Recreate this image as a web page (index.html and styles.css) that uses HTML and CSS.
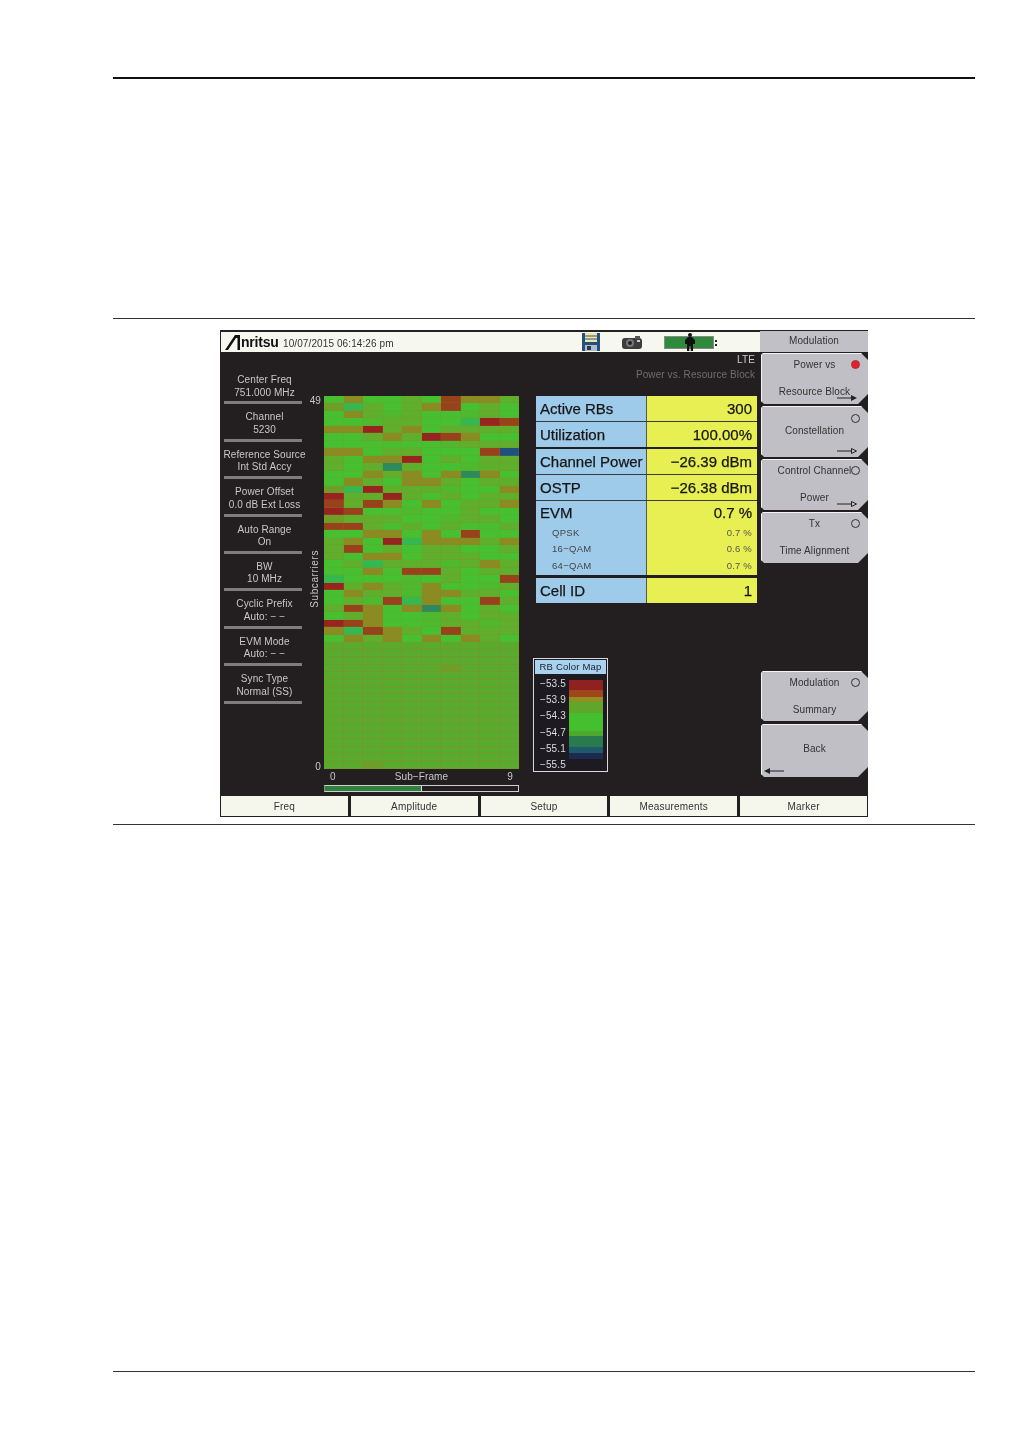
FILE: index.html
```html
<!DOCTYPE html>
<html lang="en">
<head>
<meta charset="utf-8">
<title>LTE Power vs Resource Block</title>
<link rel="stylesheet" href="styles.css">
</head>
<body>
<div class="page">
  <div class="rule-head"></div>
  <div class="rule-fig"></div>
  <div class="figure">
    <div class="device">
      <div class="main">
        <div class="titlebar">
          <div class="logo">
            <svg class="logo-a" width="15" height="15" viewBox="0 0 15 15"><path d="M0 15 L10 0 H15 V15 H12.500 V3 H11 L3 15 Z" fill="#111"/></svg>
            <span class="logo-text">nritsu</span>
          </div>
          <span class="date">10/07/2015 06:14:26 pm</span>
          <svg class="ic-floppy" width="18" height="18" viewBox="0 0 18 18"><rect width="18" height="18" fill="#24507a"/><rect x="3" y="0" width="12" height="9" fill="#e9e6b4"/><path d="M3 3h12M3 6h12" stroke="#44505a" stroke-width="1"/><rect x="3" y="12" width="12" height="6" fill="#aebccb"/><rect x="5" y="13" width="4" height="4" fill="#2c3a48"/></svg>
          <svg class="ic-camera" width="20" height="13" viewBox="0 0 20 13"><rect x="0" y="2" width="20" height="11" rx="3" fill="#3d3d3d"/><rect x="13" y="0" width="5" height="3" fill="#555"/><circle cx="8" cy="7" r="4" fill="#777"/><circle cx="8" cy="7" r="2" fill="#222"/><rect x="15" y="4" width="3" height="2" fill="#ccc"/></svg>
          <svg class="ic-battery" width="54" height="18" viewBox="0 0 54 18"><rect x=".5" y="3.500" width="49" height="12" fill="#2f8a3c" stroke="#8a8a8a"/><path d="M51 7h2v2h-2zM51 11h2v2h-2z" fill="#222"/><circle cx="26" cy="2" r="2" fill="#111"/><path d="M24 4h4l3 3v4l-2 0v7h-2.300v-5h-1.400v5h-2.300v-7l-2 0v-4z" fill="#111"/></svg>
        </div>
        <div class="body">
          <div class="params">
            <div class="param">Center Freq<br>751.000 MHz</div>
            <div class="param">Channel<br>5230</div>
            <div class="param">Reference Source<br>Int Std Accy</div>
            <div class="param">Power Offset<br>0.0 dB Ext Loss</div>
            <div class="param">Auto Range<br>On</div>
            <div class="param">BW<br>10 MHz</div>
            <div class="param">Cyclic Prefix<br>Auto: − −</div>
            <div class="param">EVM Mode<br>Auto: − −</div>
            <div class="param">Sync Type<br>Normal (SS)</div>
          </div>
          <div class="plot">
            <div class="plot-row">
              <div class="y-axis">
                <span>49</span>
                <span class="y-title">Subcarriers</span>
                <span class="y-zero">0</span>
              </div>
              <div class="heatmap" id="heatmap"></div>
            </div>
            <div class="x-axis"><span>0</span><span>Sub−Frame</span><span>9</span></div>
            <div class="progress"><div class="progress-fill"></div></div>
          </div>
          <div class="readout">
            <div class="status">
              <div class="status-mode">LTE</div>
              <div class="status-view">Power vs. Resource Block</div>
            </div>
            <div class="table">
              <div class="row"><span class="lab">Active RBs</span><span class="val">300</span></div>
              <div class="row sep-thick"><span class="lab">Utilization</span><span class="val">100.00%</span></div>
              <div class="row"><span class="lab">Channel Power</span><span class="val">−26.39 dBm</span></div>
              <div class="row"><span class="lab">OSTP</span><span class="val">−26.38 dBm</span></div>
              <div class="row row-sub"><span class="lab">EVM</span><span class="val">0.7 %</span></div>
              <div class="row row-mini"><span class="lab">QPSK</span><span class="val">0.7 %</span></div>
              <div class="row row-mini"><span class="lab">16−QAM</span><span class="val">0.6 %</span></div>
              <div class="row row-mini sep-thick"><span class="lab">64−QAM</span><span class="val">0.7 %</span></div>
              <div class="row"><span class="lab">Cell ID</span><span class="val">1</span></div>
            </div>
            <div class="legend">
              <div class="legend-title">RB Color Map</div>
              <div class="legend-body">
                <div class="legend-labels">
                  <span>−53.5</span><span>−53.9</span><span>−54.3</span><span>−54.7</span><span>−55.1</span><span>−55.5</span>
                </div>
                <div class="legend-swatch"></div>
              </div>
            </div>
          </div>
        </div>
      </div>
      <div class="keys">
        <div class="keys-title">Modulation</div>
        <div class="key"><span>Power vs</span><span>Resource Block</span>
          <i class="radio radio-on"></i>
          <svg class="arrow" width="20" height="6" viewBox="0 0 20 6"><path d="M0 3h14" stroke="#222"/><path d="M14 0l6 3-6 3z" fill="#222"/></svg>
        </div>
        <div class="key key-single"><span>Constellation</span>
          <i class="radio"></i>
          <svg class="arrow" width="20" height="6" viewBox="0 0 20 6"><path d="M0 3h14" stroke="#222"/><path d="M14.500 .5l5 2.500-5 2.500z" fill="none" stroke="#222"/></svg>
        </div>
        <div class="key"><span>Control Channel</span><span>Power</span>
          <i class="radio"></i>
          <svg class="arrow" width="20" height="6" viewBox="0 0 20 6"><path d="M0 3h14" stroke="#222"/><path d="M14.500 .5l5 2.500-5 2.500z" fill="none" stroke="#222"/></svg>
        </div>
        <div class="key"><span>Tx</span><span>Time Alignment</span>
          <i class="radio"></i>
        </div>
        <div class="key key-spaced"><span>Modulation</span><span>Summary</span>
          <i class="radio"></i>
        </div>
        <div class="key key-single key-back"><span>Back</span>
          <svg class="arrow-back" width="20" height="6" viewBox="0 0 20 6"><path d="M6 3h14" stroke="#222"/><path d="M6 0l-6 3 6 3z" fill="#222"/></svg>
        </div>
      </div>
      <div class="tabs">
        <div class="tab">Freq</div>
        <div class="tab">Amplitude</div>
        <div class="tab">Setup</div>
        <div class="tab">Measurements</div>
        <div class="tab">Marker</div>
      </div>
    </div>
  </div>
  <div class="rule-fig"></div>
  <div class="rule-foot"></div>
</div>
<script src="heatmap.js"></script>
</body>
</html>
```

FILE: styles.css
```css
* { box-sizing: border-box; }
html, body { margin: 0; padding: 0; background: #fff; }
body { font-family: "Liberation Sans", Arial, sans-serif; }

.page { display: flow-root; width: 862px; margin-left: 113px; height: 1456px; }
.rule-head { height: 2px; margin-top: 77px; background: #111; }
.rule-fig { height: 1px; background: #333; }
.rule-head + .rule-fig { margin-top: 239px; }
.rule-foot { height: 1px; margin-top: 546px; background: #333; }

.figure { padding: 11px 0 7px 107px; }

.device {
  width: 648px;
  height: 487px;
  background: #231f20;
  display: grid;
  grid-template-columns: 540px 108px;
  grid-template-rows: 465px 22px;
  font-size: 10px;
  letter-spacing: .1px;
  color: #c8c8c8;
  filter: blur(.4px);
}

/* title bar */
.main { display: flex; flex-direction: column; min-width: 0; }
.titlebar {
  height: 22px;
  margin-left: 1px;
  border-top: 2px solid #222;
  background: #f6f8f0;
  display: flex;
  align-items: center;
  color: #333;
}
.logo { display: flex; align-items: center; margin-left: 4px; width: 58px; flex: none; }
.logo-a { flex: none; }
.logo-text {
  font-size: 14px;
  font-weight: 700;
  letter-spacing: -.2px;
  color: #111;
  line-height: 15px;
  margin-left: 1px;
  margin-top: 1px;
}
.date { font-size: 10px; width: 299px; margin-top: 2px; flex: none; }
.ic-floppy { flex: none; margin-right: 22px; }
.ic-camera { flex: none; margin-right: 22px; }
.ic-battery { flex: none; }

/* body */
.body { flex: 1; display: flex; padding-left: 4px; min-height: 0; }

.params { width: 78px; padding-top: 22px; flex: none; }
.param {
  height: 30.400px;
  margin-bottom: 7px;
  padding-left: 3px;
  display: flex;
  justify-content: center;
  line-height: 12.500px;
  text-align: center;
  white-space: nowrap;
  border-bottom: 3px solid #7e7c7c;
}

.plot { width: 213px; margin-left: 4px; padding-top: 44px; flex: none; display: flex; flex-direction: column; }
.plot-row { display: flex; height: 373px; }
.y-axis {
  width: 18px;
  display: flex;
  flex-direction: column;
  justify-content: space-between;
  align-items: flex-end;
  padding: 0 3px 0 0;
  line-height: 10px;
}
.y-title {
  writing-mode: vertical-rl;
  transform: rotate(180deg);
  margin-right: 1px;
  margin-bottom: 10px;
  letter-spacing: .6px;
}
.y-zero { margin-bottom: -3px; }
.heatmap {
  width: 195px;
  height: 373px;
  display: grid;
  grid-template-columns: repeat(10, 1fr);
  grid-template-rows: repeat(50, 1fr);
}
.cell { border-right: 1px solid rgba(150, 125, 50, .18); border-bottom: 1px solid rgba(150, 125, 50, .18); }
.cell-g { background: #46c030; }
.cell-l { background: #4eb82e; }
.cell-m { background: #5fae2c; }
.cell-u { background: #5aaa2e; border-color: rgba(150, 125, 50, .35); }
.cell-y { background: #6f9e28; }
.cell-o { background: #8a8c22; }
.cell-r { background: #98241f; }
.cell-b { background: #98421c; }
.cell-t { background: #36b84e; }
.cell-d { background: #2c8a5c; }
.cell-n { background: #20517e; }

.x-axis {
  margin: 2px 0 0 18px;
  padding: 0 6px;
  height: 11px;
  line-height: 11px;
  display: flex;
  justify-content: space-between;
}
.progress {
  margin: 3px 0 0 18px;
  height: 7px;
  border: 1px solid #cfcfcf;
  border-left-color: #6aa36a;
}
.progress-fill { width: 50%; height: 100%; background: #2f8140; border-right: 1px solid #ddd; }

.readout { width: 221px; margin-left: 17px; flex: none; }
.status { height: 44px; text-align: right; padding-right: 2px; line-height: 15px; }
.status-mode { color: #ccc; }
.status-view { color: #6f6d6d; letter-spacing: .1px; }

.table { display: flex; flex-direction: column; color: #161616; letter-spacing: 0; }
.row { display: flex; height: 26px; border-bottom: 1px solid #3a3a3a; }
.row.sep-thick { height: 27px; border-bottom: 2px solid #231f20; }
.row > span { display: flex; align-items: center; padding-bottom: 1px; }
.lab, .val { font-size: 15px; -webkit-text-stroke: .25px #161616; }
.lab { width: 110px; background: #9fcbeb; padding-left: 4px; white-space: nowrap; }
.val { width: 111px; background: #e7ef53; justify-content: flex-end; padding-right: 5px; border-left: 1px solid #555; }
.row.row-sub { height: 24px; border-bottom: 0; }
.row.row-mini { height: 16px; border-bottom: 0; }
.row.row-mini.sep-thick { height: 21px; padding-bottom: 0; border-bottom: 3px solid #231f20; }
.row-mini .lab { font-size: 9.500px; padding-left: 16px; color: #444; letter-spacing: .3px; -webkit-text-stroke: 0; }
.row-mini .val { font-size: 9.500px; color: #555; letter-spacing: .2px; -webkit-text-stroke: 0; }
.table > .row:last-child { height: 25px; border-bottom: 0; }

.legend {
  width: 75px;
  height: 114px;
  margin: 55px 0 0 -3px;
  border: 1px solid #d8d8d8;
  background: #1d1a22;
}
.legend-title {
  height: 14px;
  line-height: 14px;
  margin: 1px 1px 0;
  background: #a8d2f2;
  color: #222;
  text-align: center;
  font-size: 9.500px;
  letter-spacing: .2px;
}
.legend-body { display: flex; padding: 4px 4px 0 6px; }
.legend-labels { width: 29px; display: flex; flex-direction: column; gap: 4.200px; color: #ddd; line-height: 12px; }
.legend-swatch {
  width: 34px;
  height: 79px;
  margin-top: 2px;
  background: linear-gradient(#8f2120 0, #8f2120 13%, #a0461b 13%, #a0461b 21%, #918f22 21%, #918f22 28%, #60a62c 28%, #60a62c 42%, #44c02e 42%, #44c02e 64%, #4da82e 64%, #4da82e 71%, #2a7a50 71%, #2a7a50 85%, #1f5a6c 85%, #1f5a6c 92%, #1c2a50 92%, #1c2a50 100%);
}

/* soft keys */
.keys { display: flex; flex-direction: column; padding-left: 1px; }
.keys-title {
  height: 21px;
  margin: 1px 0 1px -1px;
  background: #c0c0c6;
  color: #333;
  text-align: center;
  line-height: 20px;
}
.key {
  position: relative;
  height: 51px;
  margin-bottom: 2px;
  padding-top: 5px;
  background: #bfbfc5;
  color: #333;
  display: flex;
  flex-direction: column;
  align-items: center;
  gap: 14px;
  line-height: 13px;
  box-shadow: inset 1px 1px 0 #f4f4f4;
  clip-path: polygon(2px 0, calc(100% - 7px) 0, 100% 7px, 100% calc(100% - 10px), calc(100% - 10px) 100%, 3px 100%, 0 calc(100% - 3px), 0 2px);
}
.key-single { padding-top: 18px; }
.key-spaced { height: 50px; margin-top: 106px; margin-bottom: 3px; }
.key-back { height: 53px; }
.radio {
  position: absolute;
  right: 8px;
  top: 7px;
  width: 9px;
  height: 9px;
  border: 1px solid #333;
  border-radius: 50%;
}
.radio-on { background: #e5202a; border-color: #a33; }
.key-single .radio { top: 8px; }
.arrow { position: absolute; right: 11px; bottom: 3px; }
.arrow-back { position: absolute; left: 3px; bottom: 3px; }

/* bottom tabs */
.tabs {
  grid-column: 1 / -1;
  display: flex;
  gap: 3px;
  padding: 1px;
}
.tab {
  flex: 1;
  background: #f5f6ec;
  color: #333;
  text-align: center;
  line-height: 21px;
  letter-spacing: .2px;
}
```

FILE: heatmap.js
```js
var ROWS = [
  "goggmgboom", "ytmgmobgmg", "gomlmgglmg", "gglmmggtrb",
  "oormogmmmm", "ggmomrbogg", "gggggglmmm", "oogmmgggbn",
  "mgoorgmgmm", "mgmdmgglmm", "ggomogodog", "gomgoomgmm",
  "ytrmmmlggo", "rmmrmgmgmm", "bmbogogmmo", "rbgglggmgg",
  "ymmmgglmmg", "bbmgmgmggm", "ggoogogbgg", "mogrtooomo",
  "mbgmgmmggm", "mgoogmmmgg", "gmtmmmlmom", "ggogbbmgmm",
  "tggglgmggb", "rmomlogglm", "gommloommg", "gmlbtoggbm",
  "mbogodogmg", "gmogglmgmm", "rbogglmmlm", "otbomgbmmm",
  "gomogogomg"
];
var map = document.getElementById("heatmap");
for (var r = 0; r < 50; r++) {
  for (var c = 0; c < 10; c++) {
    var k = "u";
    if (r < ROWS.length) k = ROWS[r].charAt(c);
    if ((r === 36 && c === 6) || (r === 49 && c === 2)) k = "y";
    var cell = document.createElement("div");
    cell.className = "cell cell-" + k;
    map.appendChild(cell);
  }
}
```
